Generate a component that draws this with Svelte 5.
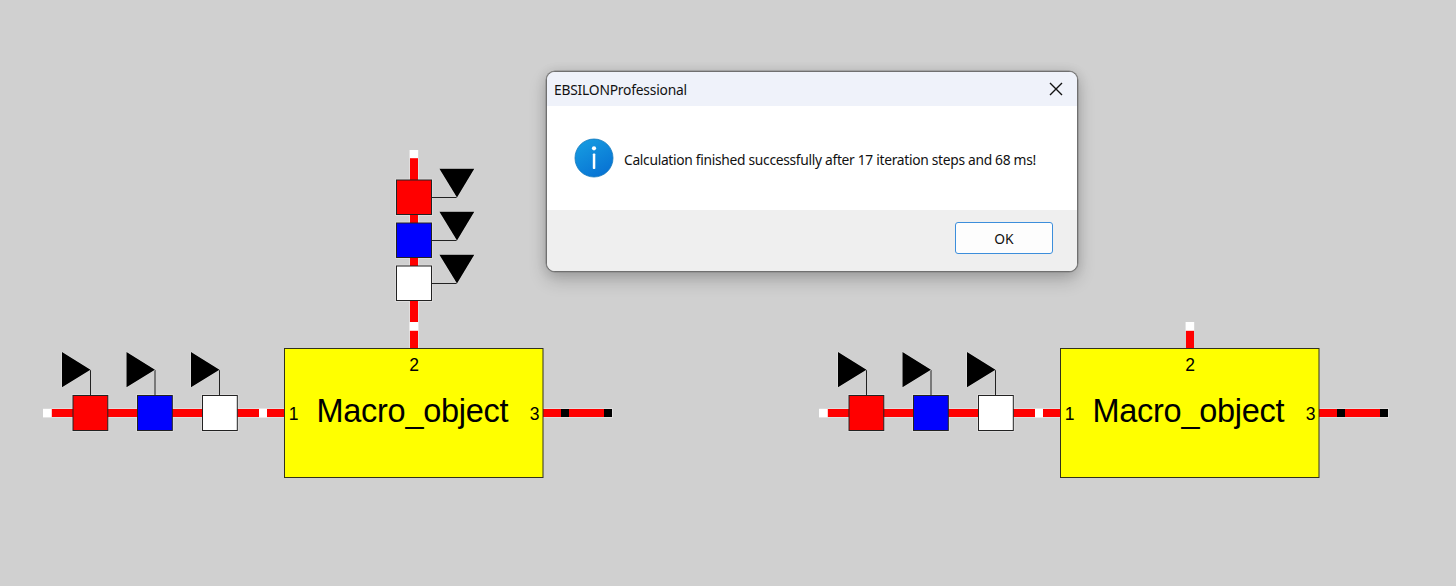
<script lang="ts">
	type Macro = { x: number; topInputs: boolean };

	const macros: Macro[] = [
		{ x: 0, topInputs: true },
		{ x: 776, topInputs: false }
	];

	const inputs = [
		{ x: 73, tip: 90.5, color: '#f00' },
		{ x: 137.5, tip: 155, color: '#00f' },
		{ x: 202.5, tip: 219.5, color: '#fff' }
	];

	const topInputs = [
		{ y: 180, color: '#f00' },
		{ y: 223, color: '#00f' },
		{ y: 266, color: '#fff' }
	];

	let open = $state(true);

	function close() {
		open = false;
	}
</script>

<main class="workspace">
	<svg class="diagram" width="1456" height="586" viewBox="0 0 1456 586">
		{#each macros as macro}
			<g transform="translate({macro.x} 0)">
				<!-- inlet 1 -->
				{#each inputs as input}
					<rect class="halo" x={input.x - 1.3} y="394.3" width="37.4" height="37.4" />
				{/each}
				<rect class="halo" x="52" y="408" width="232" height="10" />
				<rect class="pipe" x="47" y="409" width="237" height="8" />
				<rect x="43" y="408.8" width="8.8" height="8.6" fill="#fff" />
				<rect x="259" y="408.8" width="8" height="8.6" fill="#fff" />
				{#each inputs as input}
					<rect class="value" x={input.x} y="395.5" width="34.8" height="35" fill={input.color} />
					<path class="wire" d="M{input.tip} 370V395" />
					<path class="marker" d="M{input.tip - 28.5} 352L{input.tip} 369.7L{input.tip - 28.5} 387.3Z" />
				{/each}

				<!-- inlet 2 -->
				{#if macro.topInputs}
					{#each topInputs as input}
						<rect class="halo" x="395.3" y={input.y - 1.3} width="37.4" height="37.2" />
					{/each}
					<rect class="halo" x="409" y="158" width="10" height="190" />
					<rect class="pipe" x="410" y="154" width="8" height="194" />
					<rect x="409.6" y="150" width="8.6" height="8.2" fill="#fff" />
					{#each topInputs as input}
						<rect class="value" x="396.5" y={input.y} width="35" height="34.5" fill={input.color} />
						<path class="wire" d="M432 {input.y + 17.5}H457" />
						<path class="marker" d="M439.4 {input.y - 11.2}H474.3L457 {input.y + 17.5}Z" />
					{/each}
				{/if}
				<rect class="pipe" x="410" y="326" width="8" height="22" />
				<rect x="409.6" y="322" width="8.6" height="8.8" fill="#fff" />

				<!-- outlet 3 -->
				<rect class="halo" x="544" y="408" width="69" height="10" />
				<rect class="pipe" x="543" y="409" width="65" height="8" />
				<rect x="561" y="409" width="8" height="8" />
				<rect x="604" y="409" width="8" height="8" />

				<rect class="macro" x="284.5" y="348.5" width="258.5" height="129" />
				<text class="port" x="293.5" y="420">1</text>
				<text class="port" x="414" y="370.6">2</text>
				<text class="port" x="534.7" y="420">3</text>
				<text class="name" x="412.5" y="422" textLength="192">Macro_object</text>
			</g>
		{/each}
	</svg>

	{#if open}
		<div class="dialog" role="dialog" aria-labelledby="dialog-title">
			<header>
				<span id="dialog-title">EBSILONProfessional</span>
				<button class="close" aria-label="Close" onclick={close}>
					<svg width="14" height="14" viewBox="0 0 14 14">
						<path d="M1 1L13 13M13 1L1 13" />
					</svg>
				</button>
			</header>
			<div class="content">
				<svg class="info" width="40" height="40" viewBox="0 0 40 40">
					<defs>
						<linearGradient id="info-fill" x1="0" y1="0" x2="0.6" y2="1">
							<stop offset="0" stop-color="#18a0e2" />
							<stop offset="1" stop-color="#0874d4" />
						</linearGradient>
					</defs>
					<circle cx="20" cy="20" r="19" fill="url(#info-fill)" stroke="#1479bd" stroke-width="0.8" />
					<circle cx="20" cy="10.3" r="2.1" fill="#fff" />
					<rect x="18.8" y="15.5" width="2.5" height="15.5" rx="0.8" fill="#fff" />
				</svg>
				<p>Calculation finished successfully after 17 iteration steps and 68 ms!</p>
			</div>
			<footer>
				<button class="ok" onclick={close}>OK</button>
			</footer>
		</div>
	{/if}
</main>

<style>
	:global(body) {
		margin: 0;
	}

	.workspace {
		position: relative;
		width: 1456px;
		height: 586px;
		overflow: hidden;
		background: #d0d0d0;
	}

	.diagram {
		display: block;
		font-family: 'Liberation Sans', Arial, sans-serif;
	}

	.pipe {
		fill: #f00;
	}

	.halo {
		fill: #e0dede;
	}

	.value {
		stroke: #222;
		stroke-width: 1;
	}

	.wire {
		fill: none;
		stroke: #222;
		stroke-width: 1;
	}

	.marker {
		fill: #000;
		stroke: #e4e4e4;
		stroke-width: 1;
		paint-order: stroke;
	}

	.macro {
		fill: #ff0;
		stroke: #33331a;
		stroke-width: 1;
	}

	.port {
		font-size: 17.5px;
		text-anchor: middle;
	}

	.name {
		font-size: 32.5px;
		text-anchor: middle;
	}

	.dialog {
		position: absolute;
		left: 546px;
		top: 71px;
		display: flex;
		flex-direction: column;
		box-sizing: border-box;
		width: 531.5px;
		height: 200.5px;
		overflow: hidden;
		border: 1px solid #707070;
		border-radius: 9px;
		background: #fff;
		box-shadow:
			0 0 0 0.5px #888,
			0 8px 18px rgba(0, 0, 0, 0.2),
			0 1px 12px rgba(0, 0, 0, 0.12);
		color: #111;
		font-family: 'Noto Sans', 'Open Sans', sans-serif;
		font-size: 13.8px;
		letter-spacing: -0.3px;
	}

	header {
		display: flex;
		align-items: center;
		justify-content: space-between;
		flex: 0 0 34px;
		padding: 0 13.5px 0 7px;
		background: #eff2fa;
	}

	#dialog-title {
		padding-top: 1px;
		letter-spacing: -0.2px;
	}

	.close {
		display: flex;
		padding: 0;
		border: 0;
		background: none;
	}

	.close path {
		fill: none;
		stroke: #111;
		stroke-width: 1.4;
	}

	.content {
		display: flex;
		align-items: center;
		flex: 1;
		gap: 10px;
		padding-left: 27px;
	}

	.content p {
		margin: 0;
		padding-top: 2px;
		white-space: nowrap;
	}

	footer {
		display: flex;
		align-items: center;
		justify-content: flex-end;
		box-sizing: border-box;
		flex: 0 0 60.5px;
		padding: 0 23.5px 5px 0;
		background: #efefef;
	}

	.ok {
		width: 98px;
		height: 32px;
		padding: 1px 0 0;
		border: 1px solid #3c8edb;
		border-radius: 3px;
		background: #fdfdfd;
		color: #111;
		font: inherit;
	}
</style>
